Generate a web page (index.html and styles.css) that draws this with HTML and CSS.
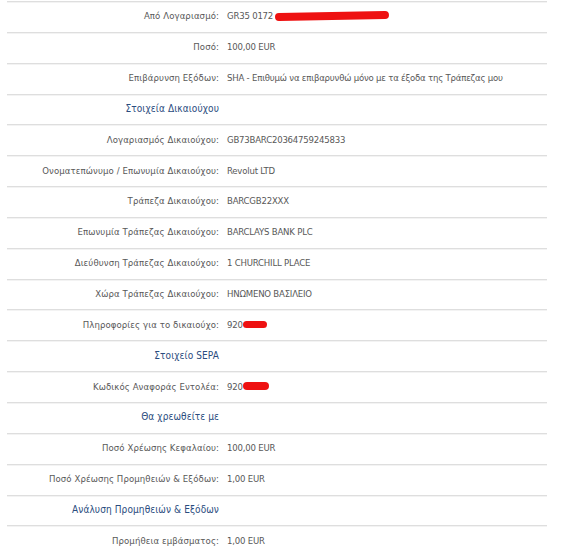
FILE: index.html
```html
<!DOCTYPE html>
<html lang="el">
<head>
<meta charset="utf-8">
<link rel="stylesheet" href="styles.css">
</head>
<body>
<div class="table">
  <div class="row"><div class="label">Από Λογαριασμό:</div><div class="value">GR35 0172 <span class="redact r1"></span></div></div>
  <div class="row"><div class="label">Ποσό:</div><div class="value">100,00 EUR</div></div>
  <div class="row"><div class="label">Επιβάρυνση Εξόδων:</div><div class="value">SHA - Επιθυμώ να επιβαρυνθώ μόνο με τα έξοδα της Τράπεζας μου</div></div>
  <div class="row head"><div class="label">Στοιχεία Δικαιούχου</div></div>
  <div class="row"><div class="label">Λογαριασμός Δικαιούχου:</div><div class="value">GB73BARC20364759245833</div></div>
  <div class="row"><div class="label">Ονοματεπώνυμο / Επωνυμία Δικαιούχου:</div><div class="value">Revolut LTD</div></div>
  <div class="row"><div class="label">Τράπεζα Δικαιούχου:</div><div class="value">BARCGB22XXX</div></div>
  <div class="row"><div class="label">Επωνυμία Τράπεζας Δικαιούχου:</div><div class="value">BARCLAYS BANK PLC</div></div>
  <div class="row"><div class="label">Διεύθυνση Τράπεζας Δικαιούχου:</div><div class="value">1 CHURCHILL PLACE</div></div>
  <div class="row"><div class="label">Χώρα Τράπεζας Δικαιούχου:</div><div class="value">ΗΝΩΜΕΝΟ ΒΑΣΙΛΕΙΟ</div></div>
  <div class="row"><div class="label">Πληροφορίες για το δικαιούχο:</div><div class="value">920<span class="redact r2"></span></div></div>
  <div class="row head"><div class="label">Στοιχείο SEPA</div></div>
  <div class="row"><div class="label">Κωδικός Αναφοράς Εντολέα:</div><div class="value">920<span class="redact r3"></span></div></div>
  <div class="row head"><div class="label">Θα χρεωθείτε με</div></div>
  <div class="row"><div class="label">Ποσό Χρέωσης Κεφαλαίου:</div><div class="value">100,00 EUR</div></div>
  <div class="row"><div class="label">Ποσό Χρέωσης Προμηθειών &amp; Εξόδων:</div><div class="value">1,00 EUR</div></div>
  <div class="row head"><div class="label">Ανάλυση Προμηθειών &amp; Εξόδων</div></div>
  <div class="row"><div class="label">Προμήθεια εμβάσματος:</div><div class="value">1,00 EUR</div></div>
</div>
</body>
</html>
```
FILE: styles.css
```css
html, body {
  margin: 0;
  padding: 0;
  background: #ffffff;
}
body {
  font-family: "DejaVu Sans Condensed", "DejaVu Sans", Verdana, sans-serif;
  font-size: 9.5px;
  color: #585858;
}
.table {
  width: 540px;
  margin-left: 7px;
  padding-top: 1px;
}
.row {
  display: flex;
  align-items: center;
  height: 27.85px;
  padding-bottom: 2px;
  border-top: 1px solid #dedede;
  box-shadow: inset 0 1px 0 #f3f3f3;
}
.label {
  width: 212px;
  text-align: right;
  flex: none;
  white-space: nowrap;
  letter-spacing: 0.1px;
}
.value {
  margin-left: 8px;
  white-space: nowrap;
  display: flex;
  align-items: center;
  letter-spacing: -0.2px;
}
.head .label {
  font-size: 10px;
  color: #2a4c7e;
  letter-spacing: 0.1px;
}
.redact {
  display: inline-block;
  background: #ee1111;
  border-radius: 4px;
}
.r1 {
  width: 114px;
  height: 8px;
  margin-left: 2px;
  transform: rotate(-1deg);
}
.r2 {
  width: 24px;
  height: 7px;
}
.r3 {
  width: 26px;
  height: 8px;
}
```
